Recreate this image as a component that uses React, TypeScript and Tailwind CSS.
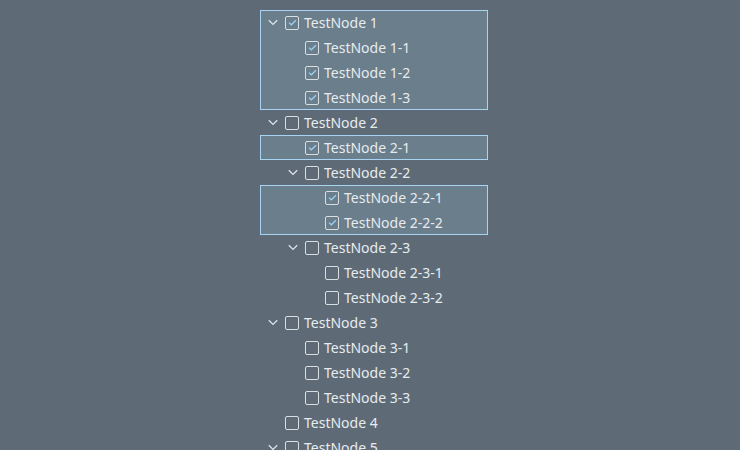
import React from "react";

type Node = { label: string; level: number; expandable?: boolean; checked?: boolean };

const GROUPS: { selected: boolean; rows: Node[] }[] = [
  {
    selected: true,
    rows: [
      { label: "TestNode 1", level: 0, expandable: true, checked: true },
      { label: "TestNode 1-1", level: 1, checked: true },
      { label: "TestNode 1-2", level: 1, checked: true },
      { label: "TestNode 1-3", level: 1, checked: true },
    ],
  },
  { selected: false, rows: [{ label: "TestNode 2", level: 0, expandable: true }] },
  { selected: true, rows: [{ label: "TestNode 2-1", level: 1, checked: true }] },
  { selected: false, rows: [{ label: "TestNode 2-2", level: 1, expandable: true }] },
  {
    selected: true,
    rows: [
      { label: "TestNode 2-2-1", level: 2, checked: true },
      { label: "TestNode 2-2-2", level: 2, checked: true },
    ],
  },
  {
    selected: false,
    rows: [
      { label: "TestNode 2-3", level: 1, expandable: true },
      { label: "TestNode 2-3-1", level: 2 },
      { label: "TestNode 2-3-2", level: 2 },
      { label: "TestNode 3", level: 0, expandable: true },
      { label: "TestNode 3-1", level: 1 },
      { label: "TestNode 3-2", level: 1 },
      { label: "TestNode 3-3", level: 1 },
      { label: "TestNode 4", level: 0 },
      { label: "TestNode 5", level: 0, expandable: true },
    ],
  },
];

const PAD = ["pl-[8px]", "pl-[28px]", "pl-[48px]"];

function Chevron() {
  return (
    <svg width="10" height="7" viewBox="0 0 10 7" fill="none">
      <path d="M0.8 1.2 L5 5.4 L9.2 1.2" stroke="#dfe4e8" strokeWidth="1.3" />
    </svg>
  );
}

function Check({ checked }: { checked?: boolean }) {
  return (
    <div className="flex h-[14px] w-[14px] items-center justify-center rounded-[2px] border border-[#d9dee3]">
      {checked && (
        <svg width="9" height="7" viewBox="0 0 9 7" fill="none">
          <path d="M1 3.6 L3.3 5.8 L8 1.2" stroke="#9fd2f2" strokeWidth="1.2" />
        </svg>
      )}
    </div>
  );
}

function Row({ node }: { node: Node }) {
  return (
    <div className={`flex h-[25px] items-center ${PAD[node.level]}`}>
      <div className="flex w-[17px] items-center">{node.expandable && <Chevron />}</div>
      <Check checked={node.checked} />
      <span className="ml-[5px] mt-[1px] text-[14px] leading-none text-[#e8ebee]">{node.label}</span>
    </div>
  );
}

export default function App() {
  return (
    <div
      className="h-[450px] w-[740px] overflow-hidden bg-[#5e6b77] pt-[10px]"
      style={{ fontFamily: '"Noto Sans", sans-serif' }}
    >
      <div className="ml-[260px] w-[228px]">
        {GROUPS.map((g, i) => (
          <div
            key={i}
            className={
              g.selected
                ? "bg-[#6a7e8c] outline outline-1 -outline-offset-1 outline-[#a6d4f2]"
                : ""
            }
          >
            {g.rows.map((n) => (
              <Row key={n.label} node={n} />
            ))}
          </div>
        ))}
      </div>
    </div>
  );
}
